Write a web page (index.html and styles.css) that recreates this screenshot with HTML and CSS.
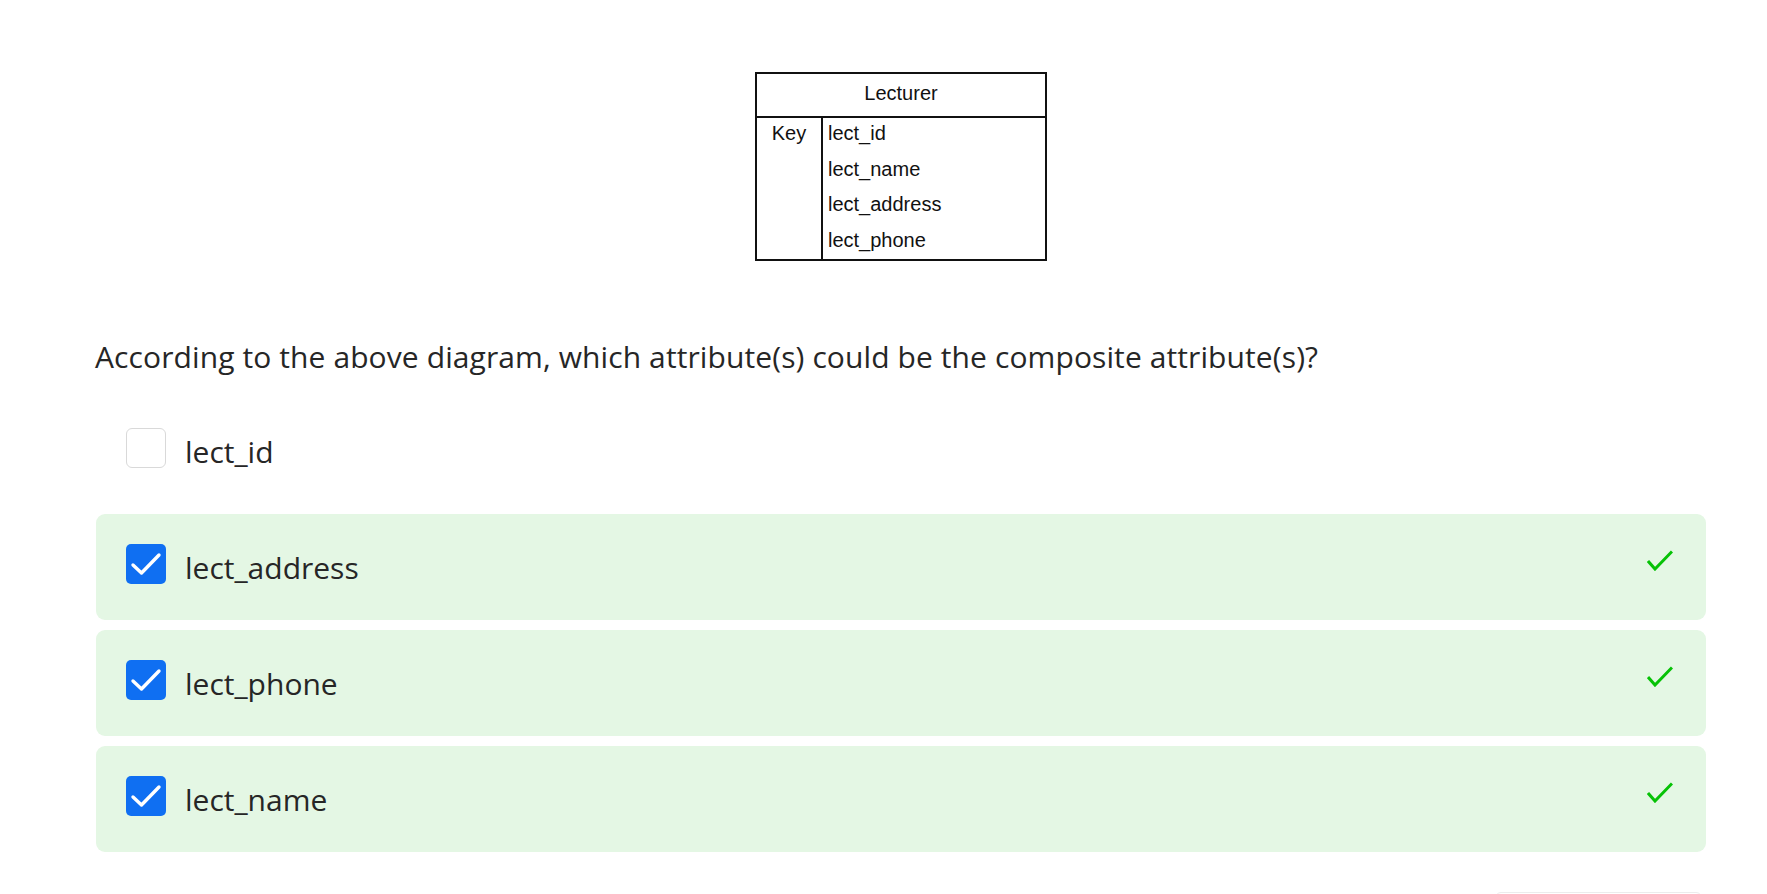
FILE: index.html
```html
<!DOCTYPE html>
<html>
<head>
<meta charset="utf-8">
<link rel="stylesheet" href="styles.css">
</head>
<body>
<div class="page">
  <div class="figure">
    <div class="er">
      <div class="er-title">Lecturer</div>
      <div class="er-body">
        <div class="er-key">Key</div>
        <div class="er-attrs">
          <div class="er-attr">lect_id</div>
          <div class="er-attr">lect_name</div>
          <div class="er-attr">lect_address</div>
          <div class="er-attr">lect_phone</div>
        </div>
      </div>
    </div>
  </div>

  <p class="question">According to the above diagram, which attribute(s) could be the composite attribute(s)?</p>

  <div class="options">
    <div class="option">
      <span class="box"></span>
      <span class="label">lect_id</span>
    </div>
    <div class="option correct">
      <span class="box checked"><svg viewBox="0 0 40 40" width="40" height="40"><path d="M7 21 L15.5 29 L33 11" fill="none" stroke="#fff" stroke-width="3.4" stroke-linecap="round" stroke-linejoin="round"/></svg></span>
      <span class="label">lect_address</span>
      <svg class="tick" viewBox="0 0 26 21" width="26" height="21"><path d="M1 11 L8 19 L25 1.5" fill="none" stroke="#06c206" stroke-width="3"/></svg>
    </div>
    <div class="option correct">
      <span class="box checked"><svg viewBox="0 0 40 40" width="40" height="40"><path d="M7 21 L15.5 29 L33 11" fill="none" stroke="#fff" stroke-width="3.4" stroke-linecap="round" stroke-linejoin="round"/></svg></span>
      <span class="label">lect_phone</span>
      <svg class="tick" viewBox="0 0 26 21" width="26" height="21"><path d="M1 11 L8 19 L25 1.5" fill="none" stroke="#06c206" stroke-width="3"/></svg>
    </div>
    <div class="option correct">
      <span class="box checked"><svg viewBox="0 0 40 40" width="40" height="40"><path d="M7 21 L15.5 29 L33 11" fill="none" stroke="#fff" stroke-width="3.4" stroke-linecap="round" stroke-linejoin="round"/></svg></span>
      <span class="label">lect_name</span>
      <svg class="tick" viewBox="0 0 26 21" width="26" height="21"><path d="M1 11 L8 19 L25 1.5" fill="none" stroke="#06c206" stroke-width="3"/></svg>
    </div>
  </div>

  <div class="footer">
    <div class="next-btn"></div>
  </div>
</div>
</body>
</html>
```

FILE: styles.css
```css
html, body {
  margin: 0;
  padding: 0;
  background: #ffffff;
}

body {
  font-family: "Open Sans", "Noto Sans", sans-serif;
  color: #262626;
  overflow: hidden;
}

.page {
  width: 1706px;
  height: 894px;
  box-sizing: border-box;
  overflow: hidden;
  padding: 72px 0 0 96px;
}

.figure {
  display: flex;
  justify-content: center;
}

.er {
  width: 292px;
  height: 189px;
  box-sizing: border-box;
  border: 2px solid #111;
  display: flex;
  flex-direction: column;
  font-family: "Liberation Sans", Arial, sans-serif;
  font-size: 20px;
  color: #111;
}

.er-title {
  height: 44px;
  box-sizing: border-box;
  line-height: 38px;
  text-align: center;
  border-bottom: 2px solid #111;
  flex: none;
}

.er-body {
  flex: 1;
  display: flex;
  overflow: hidden;
}

.er-key {
  width: 66px;
  box-sizing: border-box;
  border-right: 2px solid #111;
  text-align: center;
  padding-top: 4px;
  line-height: 22px;
}

.er-attrs {
  padding: 4px 0 0 5px;
}

.er-attr {
  line-height: 22px;
  margin-bottom: 13.7px;
}

.er-attr:last-child {
  margin-bottom: 0;
}

.question {
  margin: 75px 0 0 -1px;
  font-size: 30px;
  line-height: 41px;
  font-weight: 400;
  letter-spacing: 0.1px;
  color: #262626;
}

.options {
  margin-top: 21px;
  display: flex;
  flex-direction: column;
  gap: 10px;
}

.option {
  height: 106px;
  display: flex;
  align-items: center;
  padding: 0 33px 0 30px;
  border-radius: 9px;
}

.option.correct {
  background: #e4f7e4;
}

.box {
  width: 40px;
  height: 40px;
  box-sizing: border-box;
  border: 1.5px solid #d9d9d9;
  border-radius: 6px;
  background: #fff;
  margin-top: -6px;
  flex: none;
}

.box.checked {
  border: none;
  background: #0f6ff2;
  border-radius: 5px;
}

.box svg {
  display: block;
}

.label {
  margin-left: 19px;
  font-size: 30px;
  flex: 1;
  color: #262626;
}

.tick {
  align-self: flex-start;
  margin-top: 36px;
  flex: none;
}

.footer {
  display: flex;
  justify-content: flex-end;
  margin-top: 40px;
  padding-right: 4px;
}

.next-btn {
  width: 205px;
  height: 50px;
  border: 1px solid #ececec;
  border-radius: 6px;
}
```
